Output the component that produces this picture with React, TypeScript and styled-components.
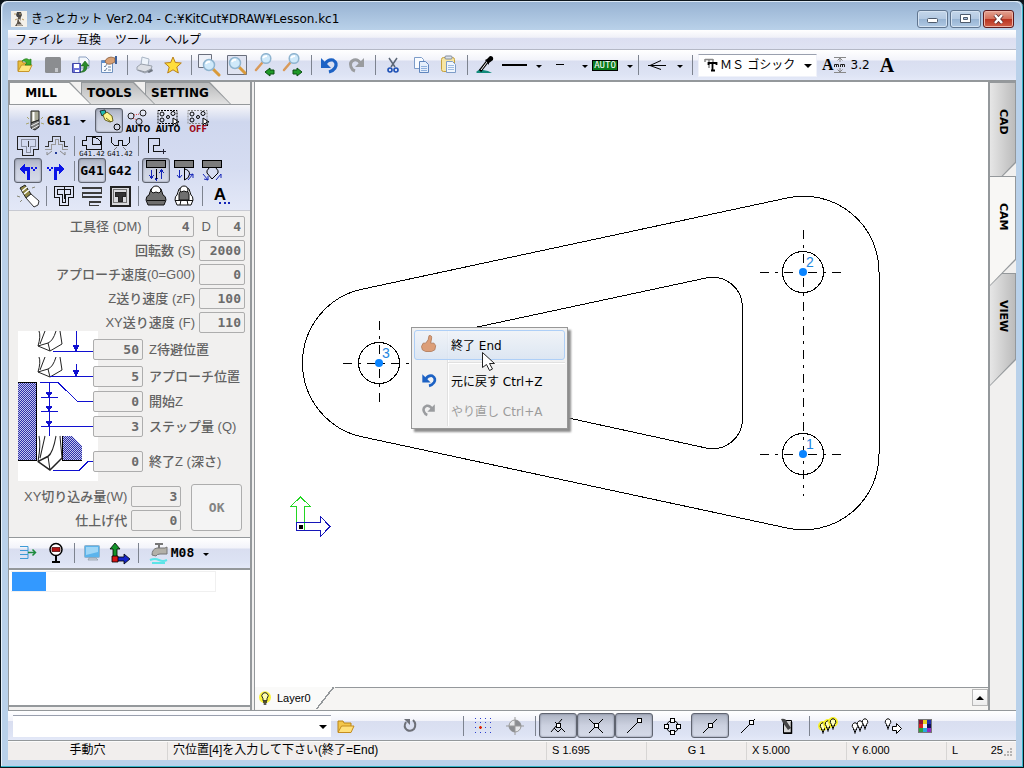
import React from "react";
import styled, { createGlobalStyle, css } from "styled-components";

const ui = `"DejaVu Sans", "Noto Sans CJK JP", sans-serif`;
const gothic = `"Liberation Sans", "Noto Sans CJK JP", sans-serif`;
const mono = `"DejaVu Sans Mono", "Noto Sans CJK JP", monospace`;
const line = "#94989b";
const barFill = "linear-gradient(#ffffff 0%, #f2f3fa 34%, #d9def0 36%, #dde3f4 80%, #e4e9f8 100%)";

const GlobalStyle = createGlobalStyle`
  * { box-sizing: border-box; }
  body { margin: 0; background: #0b141b; font: 12px ${ui}; color: #000; }
  button, input, select { font: inherit; color: inherit; margin: 0; }
  button { padding: 0; border: 0; background: none; }
  svg { display: block; flex: none; }
`;

/* ---------- window frame ---------- */
const Frame = styled.div`
  min-height: 100vh;
  display: flex;
  flex-direction: column;
  padding: 0 7px 7px;
  border: 1px solid #0b141b;
  border-radius: 7px 7px 0 0;
  background: #b9d1ea;
  box-shadow: inset -1px -1px 0 #35b5c8, inset 1px 1px 0 #e8f2fb;
`;
const TitleBar = styled.header`
  height: 29px;
  margin: 0 -5px;
  padding: 5px 7px 0 8px;
  display: flex;
  align-items: center;
  gap: 4px;
  background: linear-gradient(#98b3d3, #b9d1e9);
  border-radius: 6px 6px 0 0;
  border-top: 1px solid #dbe8f5;
`;
const Title = styled.h1`
  flex: 1;
  margin: 0;
  font: 12px/18px ${ui};
  white-space: nowrap;
`;
const WindowButtons = styled.div`
  display: flex;
  gap: 2px;
`;
const WindowButton = styled.button<{ $danger?: boolean }>`
  width: 31px;
  height: 18px;
  display: grid;
  place-items: center;
  border: 1px solid ${(p) => (p.$danger ? "#5e1a1c" : "#60758f")};
  border-radius: 3px;
  background: ${(p) =>
    p.$danger
      ? "linear-gradient(#e3a494 0%, #d4705a 48%, #b93320 52%, #cf5f48 100%)"
      : "linear-gradient(#c4d6ea 0%, #b3c9e2 48%, #98b4d3 52%, #b0c9e4 100%)"};
  box-shadow: inset 0 0 0 1px ${(p) => (p.$danger ? "#eeb3a6" : "#d5e3f2")};
`;
const MenuBar = styled.nav`
  height: 20px;
  display: flex;
  background: linear-gradient(#ffffff, #f0f1f8 38%, #dcdff1 45%, #dfe3f3);
  border-bottom: 1px solid #b4b8c6;
`;
const MenuItem = styled.button`
  padding: 0 7px;
  font-size: 12px;
  line-height: 18px;
  white-space: nowrap;
`;

/* ---------- tool bars ---------- */
const ToolBar = styled.div`
  height: 32px;
  flex: none;
  display: flex;
  align-items: center;
  padding-left: 3px;
  background: ${barFill};
  border-bottom: 2px solid ${line};
`;
const Separator = styled.span`
  width: 8px;
  height: 20px;
  flex: none;
  background: linear-gradient(#7d838f, #7d838f) 4px 0 / 1px 100% no-repeat;
`;
const ToolButton = styled.button<{ $w?: number; $on?: boolean }>`
  width: ${(p) => p.$w ?? 28}px;
  height: 25px;
  flex: none;
  display: flex;
  align-items: center;
  justify-content: center;
  ${(p) =>
    p.$on &&
    css`
      border: 1px solid #5f6470;
      border-radius: 3px;
      background: linear-gradient(#aeb4c4, #ccd1e0 50%, #d6dbe9);
      box-shadow: inset 0 0 2px #6b7080;
    `}
`;
const CodeLabel = styled.span`
  font: bold 13px/16px ${mono};
`;
const Caret = styled.i<{ $far?: boolean }>`
  border: 3px solid transparent;
  border-top-color: #000;
  border-bottom: 0;
  margin: 2px 0 0 ${(p) => (p.$far ? 10 : 9)}px;
`;
const AutoBadge = styled.span`
  padding: 0 1px;
  border: 1px solid #000;
  background: #0a7a1c;
  color: #fff;
  font: 9px/9px ${mono};
`;
const FontBox = styled.label`
  position: relative;
  width: 119px;
  height: 23px;
  margin: 0 5px 0 2px;
  display: flex;
  align-items: center;
  padding-left: 5px;
  background: #fff;
  border: 1px solid #f0f2fa;
  border-top-color: #9aa0ae;
`;
const Select = styled.select`
  flex: 1;
  min-width: 0;
  height: 100%;
  appearance: none;
  border: 0;
  padding: 0 18px 0 2px;
  outline: none;
  background: none;
  font: 12px/18px ${gothic};
`;
const BoxCaret = styled.i`
  position: absolute;
  right: 4px;
  top: 9px;
  border: 4px solid transparent;
  border-top-color: #000;
  border-bottom: 0;
  pointer-events: none;
`;
const SerifA = styled.span`
  font: bold 20px/22px "Liberation Serif", serif;
`;
const SizeLabel = styled.span`
  font-size: 12px;
  padding: 0 10px 0 5px;
`;
const HeightButton = styled.button`
  display: flex;
  align-items: center;
  font: bold 16px/20px "Liberation Serif", serif;
`;

/* ---------- body ---------- */
const Body = styled.main`
  flex: 1;
  display: flex;
  background: #f1f0ef;
`;
const Side = styled.aside`
  width: 244px;
  flex: none;
  display: flex;
  flex-direction: column;
  margin-right: 2px;
  border-left: 1px solid ${line};
  border-right: 2px solid ${line};
`;
const SideTabs = styled.div`
  height: 22px;
  flex: none;
  display: flex;
`;
const SideTab = styled.button<{ $w: number; $active?: boolean; $z: number }>`
  position: relative;
  z-index: ${(p) => p.$z};
  width: ${(p) => p.$w}px;
  flex: none;
  margin-right: -10px;
  padding: 0 24px 0 6px;
  font: bold 12px/22px ${ui};
  background: ${line};
  clip-path: polygon(0 0, calc(100% - 21px) 0, 100% 100%, 0 100%);
  &::before {
    content: "";
    position: absolute;
    z-index: -1;
    inset: 1px 1px 0 1px;
    background: ${(p) => (p.$active ? "#fafaf9" : "linear-gradient(#b9babb, #e2e2e2)")};
    clip-path: polygon(0 0, calc(100% - 21px) 0, 100% 100%, 0 100%);
  }
`;
const ToolBlock = styled.section`
  flex: none;
  padding: 3px 0 2px 5px;
  border-top: 1px solid ${line};
  border-bottom: 1px solid #c8cad2;
  background: linear-gradient(#f6f6f9, #cfd7ee 16%, #d5dcf1 60%, #e3e8f7);
`;
const ToolRow = styled.div`
  height: 25px;
  display: flex;
  align-items: center;
`;
const Form = styled.form`
  flex: none;
  margin: 0;
  padding: 3px 5px 5px 9px;
  color: #626262;
  font: 500 13px/21px ${gothic};
  border-bottom: 1px solid ${line};
`;
const FieldRow = styled.div`
  display: flex;
  align-items: center;
  justify-content: flex-end;
  height: 24px;
`;
const FieldLabel = styled.label<{ $wide?: boolean }>`
  margin: 0 ${(p) => (p.$wide ? 6 : 4)}px 0 ${(p) => (p.$wide ? 8 : 6)}px;
  white-space: nowrap;
`;
const Field = styled.input<{ $w?: number }>`
  width: ${(p) => p.$w ?? 46}px;
  height: 21px;
  flex: none;
  padding: 0 3px;
  border: 1px solid #adadad;
  border-radius: 2px;
  background: #f1f0ef;
  color: #6b6b6b;
  font: bold 13px/18px ${mono};
  text-align: right;
`;
const DepthArea = styled.div`
  display: flex;
  margin-top: -3px;
`;
const DepthGrid = styled.div`
  margin: 8px 0 0 -5px;
  display: grid;
  grid-template-rows: 27px 25px 25px 35px 22px;
`;
const DepthRow = styled.div`
  display: flex;
`;
const FinishArea = styled.div`
  display: flex;
  gap: 10px;
  margin-top: 3px;
  padding-right: 3px;
  justify-content: flex-end;
`;
const OkButton = styled.button`
  width: 51px;
  height: 47px;
  border: 1px solid #adadad;
  border-radius: 3px;
  background: #f4f4f4;
  color: #838383;
  font: bold 13px ${mono};
`;
const MiniBar = styled(ToolBar)`
  padding-left: 5px;
`;
const ListBox = styled.div`
  flex: 1;
  min-height: 100px;
  margin-bottom: 3px;
  padding: 1px 2px;
  background: #fff;
  border-bottom: 2px solid ${line};
`;
const ListRow = styled.div`
  width: 205px;
  height: 21px;
  border: 1px solid #f0f0f0;
  border-left: 0;
  background: linear-gradient(#3399ff, #3399ff) 1px 0 / 34px 100% no-repeat;
`;

/* ---------- drawing area ---------- */
const Work = styled.section`
  flex: 1;
  min-width: 0;
  display: flex;
  flex-direction: column;
  border-left: 1px solid ${line};
  border-right: 2px solid ${line};
`;
const Canvas = styled.div`
  position: relative;
  flex: 1;
  display: flex;
  background: #fff;
  overflow: hidden;
`;
const Drawing = styled.svg`
  width: 100%;
  min-height: 460px;
  font: 14px "Liberation Sans", sans-serif;
`;
const LayerBar = styled.div`
  height: 23px;
  flex: none;
  display: flex;
  justify-content: space-between;
  align-items: flex-start;
  background: #f6f5f3;
  border-top: 1px solid ${line};
`;
const LayerTab = styled.button`
  width: 80px;
  height: 22px;
  margin-top: -1px;
  padding-left: 2px;
  display: flex;
  align-items: center;
  gap: 4px;
  font: 11px/20px ${gothic};
  background: linear-gradient(128deg, #fafaf9 80%, ${line} 80%, ${line} 82%, #f6f5f3 82%);
`;
const ScrollButton = styled.button`
  width: 16px;
  height: 17px;
  margin-top: 1px;
  display: grid;
  place-items: center;
  border: 1px solid #b8b8b8;
  background: linear-gradient(#fff, #ededed);
  &::before {
    content: "";
    border: 4px solid transparent;
    border-bottom-color: #000;
    border-top: 0;
  }
`;
const PopupMenu = styled.div`
  position: absolute;
  left: 156px;
  top: 245px;
  width: 157px;
  padding: 2px;
  border: 1px solid #979797;
  background: linear-gradient(#e0e0e0, #e0e0e0) 35px 2px / 1px calc(100% - 4px) no-repeat,
    linear-gradient(#fff, #fff) 36px 2px / 1px calc(100% - 4px) no-repeat, #f1f1f1;
  box-shadow: 3px 3px 2px #8d8d8d;
`;
const PopupItem = styled.button<{ $hot?: boolean }>`
  width: 100%;
  height: 30px;
  display: flex;
  align-items: center;
  gap: 12px;
  padding: 0 0 2px 4px;
  border: 1px solid ${(p) => (p.$hot ? "#aecff7" : "transparent")};
  border-radius: 3px;
  background: ${(p) => (p.$hot ? "linear-gradient(rgba(240,244,250,.7), rgba(216,228,243,.8))" : "none")};
  font-size: 12px;
  white-space: nowrap;
  &:disabled { color: #9b9b9b; }
`;
const PopupRule = styled.hr`
  margin: 2px 0 2px 34px;
  border: 0;
  border-top: 1px solid #e0e0e0;
  border-bottom: 1px solid #fff;
`;
const Pointer = styled.svg`
  position: absolute;
  left: 226px;
  top: 269px;
`;

const ViewTabs = styled.div`
  width: 26px;
  flex: none;
  display: flex;
  flex-direction: column;
`;
const ViewTab = styled.button<{ $h: number; $active?: boolean }>`
  position: relative;
  z-index: ${(p) => (p.$active ? 2 : 1)};
  height: ${(p) => p.$h}px;
  margin-bottom: -13px;
  padding-top: 27px;
  writing-mode: vertical-rl;
  text-align: left;
  font: bold 11px/22px ${ui};
  background: ${line};
  clip-path: polygon(0 0, 100% 0, 100% calc(100% - 26px), 0 100%);
  &::before {
    content: "";
    position: absolute;
    z-index: -1;
    inset: 1px 1px 1px 0;
    background: ${(p) => (p.$active ? "#f8f7f5" : "linear-gradient(90deg, #e6e6e6, #bcbcbc)")};
    clip-path: polygon(0 0, 100% 0, 100% calc(100% - 26px), 0 100%);
  }
`;

/* ---------- bottom ---------- */
const BottomBar = styled(ToolBar)`
  height: 31px;
  padding-left: 5px;
  border-top: 1px solid ${line};
  border-bottom: 1px solid ${line};
`;
const Combo = styled.label`
  position: relative;
  width: 318px;
  height: 22px;
  display: flex;
  background: #fff;
  border-top: 1px solid #9aa0ae;
`;
const Spacer = styled.span`
  width: 34px;
  flex: 0 1 auto;
`;
const StatusBar = styled.footer`
  height: 19px;
  flex: none;
  display: flex;
  background: #f1eeed;
  border-top: 1px solid #fbfbfb;
  font: 12px/17px ${gothic};
`;
const StatusCell = styled.div<{ $w?: number; $center?: boolean }>`
  ${(p) => (p.$w ? `width: ${p.$w}px; flex: none;` : "flex: 1; min-width: 0;")}
  padding: 0 5px;
  overflow: hidden;
  white-space: nowrap;
  text-align: ${(p) => (p.$center ? "center" : "left")};
  border-right: 1px solid #d7d5d4;
  &:last-child {
    border: 0;
    display: flex;
    padding-right: 3px;
  }
`;
const ReadOut = styled.span<{ $end?: boolean }>`
  font-size: 11px;
  margin-left: ${(p) => (p.$end ? "auto" : "0")};
`;

/* ---------- icons, drawn on a 24 x 24 grid ---------- */
const Lens = () => (
  <>
    <path d="M14 14l6 6" stroke="#d99a3a" strokeWidth="3" strokeLinecap="round" />
    <circle cx="10" cy="10" r="5.5" fill="#cfe9fa" stroke="#8fb4cf" strokeWidth="1.5" />
    <path d="M7 9q1-3 4-2" stroke="#fff" strokeWidth="2" fill="none" />
  </>
);
const TallLens = () => (
  <>
    <path d="M9 10l-6 7" stroke="#d99a5a" strokeWidth="2.5" strokeLinecap="round" />
    <circle cx="13" cy="5.5" r="4.800" fill="#cfe9fa" stroke="#8fb4cf" strokeWidth="1.5" />
    <path d="M10 5q1-2 4-2" stroke="#fff" strokeWidth="2" fill="none" />
  </>
);
const Bulb = ({ x, y, glow }: { x: number; y: number; glow?: boolean }) => (
  <g transform={`translate(${x} ${y})`} stroke="#000">
    {glow && <circle cx="3" cy="4" r="5" fill="#f7f12a" stroke="none" />}
    <path d="M1.5 6.5Q-.5 4.5 .5 2.5Q3 -1 5.5 2.5Q6.5 4.5 4.5 6.5V8h-3z" fill={glow ? "#fdfdb8" : "#fff"} />
    <path d="M2 9.5h2M2.5 11h1" strokeWidth="1.5" />
  </g>
);
const Box = ({ x, y }: { x: number; y: number }) => (
  <rect x={x - 1.5} y={y - 1.5} width="4" height="4" fill="#fff" stroke="#000" />
);
const Chain = ({ dim }: { dim?: boolean }) => (
  <g fill="none" stroke="#000">
    <rect x="2" y="1.5" width="19" height="13" strokeDasharray="2 1" stroke={dim ? "#888" : "#000"} />
    <circle cx="6" cy="5" r="2" />
    <circle cx="17" cy="4.5" r="2" />
    <circle cx="12" cy="8" r="1.5" />
    <circle cx="6" cy="11" r="2" />
    <path d="M17 9v7l2-2 2 3 1-1-2-3h3z" fill="#fff" />
  </g>
);

const art: Record<string, React.ReactNode> = {
  open: (
    <>
      <path d="M5 18V8h4l1 2h7v3" fill="#e9be3c" stroke="#b98a1c" />
      <path d="M5 18.5L8.500 12H19l-3 6.500z" fill="#ffe680" stroke="#c8962a" />
      <path d="M9 8q4-4 7-1l2-1v6h-6l2-2q-3-3-5-2z" fill="#3fae2c" stroke="#1d7a18" strokeWidth=".7" />
    </>
  ),
  save: (
    <>
      <rect x="4" y="4" width="16" height="16" rx="1.5" fill="#8b8d90" />
      <path d="M14 15h3v4h-3z" fill="#c4c6ca" />
    </>
  ),
  export: (
    <>
      <path d="M10 4h7l3 3v8H10z" fill="#f3f7fc" stroke="#8a9ec0" />
      <path d="M3.5 10.5h8v9h-8z" fill="#6d74d8" stroke="#3f46a8" />
      <path d="M5 11h5v4H5zM6 17h4v2H6z" fill="#fff" />
      <path d="M11 19q4 0 4-6h-3l4-5 4 5h-2q0 7-7 6z" fill="#2a8a2a" stroke="#135e13" strokeWidth=".6" />
    </>
  ),
  props: (
    <>
      <path d="M4.5 7.5h11v12h-11z" fill="#f6fafe" stroke="#6e90bd" />
      <path d="M5 8h10v2H5z" fill="#5a8fd0" />
      <path d="M7 13l1 1 2-3M7 17l1 1 2-3M11 14h3M11 17h3" stroke="#7186a3" fill="none" />
      <path d="M8 8q2-4 6-4l4 1v4l-4 2q-5 1-6-3z" fill="#d9a074" stroke="#7c5638" strokeWidth=".7" />
      <path d="M18 3h2v8h-2z" fill="#3e5f98" />
    </>
  ),
  print: (
    <>
      <path d="M9 4l7 2-1 7-7-1z" fill="#eef4fb" stroke="#a9b5c4" />
      <path d="M4 14l4-3 11 2-1 4-6 3-8-3z" fill="#dcdfe5" stroke="#9aa1ac" />
      <path d="M5 17l7 2 6-3" stroke="#8a919c" fill="none" />
      <path d="M14 19l5-3 1 2-4 2z" fill="#6e7580" />
    </>
  ),
  star: <path d="M12 4l2.300 5.500 6 .5-4.500 4 1.500 6-5.300-3.200L6.700 20l1.500-6-4.500-4 6-.5z" fill="#ffde3b" stroke="#b98018" />,
  zoomBox: (
    <>
      <path d="M1.5 1.5h13v13h-13z" fill="#eef1f8" stroke="#6a6f7c" />
      <g transform="translate(2 2)"><Lens /></g>
    </>
  ),
  zoomFit: (
    <>
      <path d="M2.5 2.5h19v19h-19z" fill="#dfe3f1" stroke="#6a6f7c" />
      <Lens />
    </>
  ),
  zoomPrev: (
    <>
      <TallLens />
      <path d="M12 19l5-4v2h4v4h-4v2z" fill="#1f9a28" stroke="#0b4f12" />
    </>
  ),
  zoomNext: (
    <>
      <TallLens />
      <path d="M21 19l-5-4v2h-4v4h4v2z" fill="#1f9a28" stroke="#0b4f12" />
    </>
  ),
  undo: (
    <>
      <path d="M8 11q3-5 8-4 5 3 2 8-2 3-6 4" fill="none" stroke="#1d62c4" strokeWidth="3.200" />
      <path d="M4 5v10h10z" fill="#1d62c4" />
    </>
  ),
  redo: (
    <>
      <path d="M16 11q-3-5-7-4-5 2-3 7 1 3 4 4" fill="none" stroke="#9a9c9f" strokeWidth="3" />
      <path d="M19 5v9h-9z" fill="#9a9c9f" />
    </>
  ),
  cut: (
    <>
      <path d="M8 5l6 9M16 5l-6 9" stroke="#5b6675" strokeWidth="1.5" />
      <circle cx="9" cy="17" r="2" fill="none" stroke="#1c4fb5" strokeWidth="1.6" />
      <circle cx="15" cy="17" r="2" fill="none" stroke="#1c4fb5" strokeWidth="1.6" />
    </>
  ),
  copy: (
    <>
      <path d="M5.5 4.5h7l2 2v9h-9z" fill="#fafcff" stroke="#7d9cc8" />
      <path d="M10.5 8.5h6l3 3v8h-9z" fill="#e4eefb" stroke="#5f85bd" />
      <path d="M12 13.5h6M12 15.5h6M12 17.5h6" stroke="#8fb0dd" />
    </>
  ),
  paste: (
    <>
      <rect x="4.5" y="4.500" width="13" height="14" rx="2" fill="#f7e6a4" stroke="#c5a03d" />
      <rect x="8" y="3" width="7" height="3" rx="1" fill="#dde3ec" stroke="#818b9b" />
      <path d="M9.5 8.500h6l3 3v8h-9z" fill="#f0f6fd" stroke="#7d9cc8" />
      <path d="M11 12.5h6M11 14.5h6M11 16.5h6" stroke="#9fbce2" />
    </>
  ),
  dropper: (
    <>
      <path d="M3 19q4-4 7-2l5 1 4 2H4z" fill="#138b7c" />
      <path d="M7 18l7-9" stroke="#000" strokeWidth="3" />
      <path d="M8 17l6-8" stroke="#fff" strokeWidth="1" />
      <path d="M12 7l2-1 3-3q4 0 3 4l-4 3v2z" fill="#000" />
    </>
  ),
  drill: (
    <>
      <path d="M8 2h8v9l-8 3z" fill="#a8a896" stroke="#222" />
      <path d="M10.5 3v9" stroke="#fff" strokeWidth="2" />
      <path d="M8 14l8-3v7l-4 3-4-2z" fill="#777" stroke="#222" />
      <path d="M8 17l8-4M9 20l7-4" stroke="#eee" />
      <path d="M4 8l2 2M20 8l-2 2M3 15l3-1M21 15l-3-1" stroke="#a9a46a" />
    </>
  ),
  manualHole: (
    <>
      <path d="M3 2l5-1 1 3-4 3z" fill="#20b8b0" stroke="#000" strokeWidth=".7" />
      <path d="M6 6l4-3 5 4 1 5-3 1-5-2z" fill="#fdf48a" stroke="#4a4400" strokeWidth=".8" />
      <path d="M9 9l5 4" stroke="#4a4400" strokeWidth=".8" />
      <circle cx="20" cy="18" r="3" fill="none" stroke="#000" />
    </>
  ),
  autoHoles: (
    <g fill="none" stroke="#222">
      <circle cx="5" cy="7" r="3" />
      <circle cx="17" cy="4" r="3" />
      <circle cx="13" cy="12.500" r="3" />
      <path d="M8 6l6-1M7 9l4 2" stroke="#c33" strokeDasharray="1 1" />
    </g>
  ),
  frameHoles: <Chain />,
  frameHolesOff: <Chain dim />,
  pocket: (
    <g fill="none" shapeRendering="crispEdges">
      <path d="M1.5 2.5h21v13h-5v6h-11v-6h-5z" stroke="#222" />
      <path d="M5 5.5h14v7h-5v6h-4v-6H5z" stroke="#8a8fa0" />
      <path d="M12.5 7v6" stroke="#333" />
    </g>
  ),
  profile: (
    <g fill="none" shapeRendering="crispEdges">
      <path d="M1 12.500h3v-5h4v-5h8v5h4v5h4" stroke="#333" />
      <path d="M1 15.500h6v-5h4v-5h3v5h4v5h6" stroke="#999" />
      <path d="M8 17l-5 4v-3M16 17l5 4v-3" stroke="#888" shapeRendering="auto" />
      <path d="M11 18h2v2h-2z" fill="#223a9a" />
    </g>
  ),
  corner: (
    <g fill="none" stroke="#111" shapeRendering="crispEdges">
      <path d="M2.5 6.500h4v-4h15v13h-15v-4h-4z" />
      <path d="M12.5 3v7h8q0-6-8-7" />
    </g>
  ),
  chamfer: (
    <g fill="none" stroke="#111">
      <path d="M3.5 2.500v6l3 3h4v-5h4v5h4l3-3v-6" shapeRendering="crispEdges" />
      <path d="M9 13l-3 3M15 13l3 3" stroke="#777" />
    </g>
  ),
  lead: (
    <g fill="none" stroke="#111" shapeRendering="crispEdges">
      <path d="M4.5 19V4.500h11v7h-6v6h8" />
      <path d="M19 15v5M17 17.500h5" stroke="#223" />
    </g>
  ),
  turnLeft: (
    <g fill="#0a14e8" shapeRendering="crispEdges">
      <path d="M3 10l6-5v3h5v13h-3V12H9v3z" />
      <path d="M15 8h2v2h-2zM19 8h2v2h-2zM17 10h2v2h-2z" />
    </g>
  ),
  turnRight: (
    <g fill="#0a14e8" shapeRendering="crispEdges">
      <path d="M21 10l-6-5v3h-5v13h3V12h2v3z" />
      <path d="M7 8h2v2H7zM3 8h2v2H3zM5 10h2v2H5z" />
    </g>
  ),
  plunge: (
    <g shapeRendering="crispEdges">
      <path d="M2.5 1.5h19v7h-19z" fill="#7c7c7c" stroke="#000" />
      <path d="M12.5 10v12" stroke="#000" />
      <path d="M7.5 11v8M5 16l2.500 3 2.500-3M17.500 20v-9M15 14l2.500-3 2.500 3M11 19l1.500 2 1.500-2" stroke="#1425b8" />
    </g>
  ),
  ramp: (
    <g>
      <path d="M2.5 1.5h19v7h-19z" fill="#7c7c7c" stroke="#000" shapeRendering="crispEdges" />
      <path d="M12.5 9v12q5-2 5-6 0-4-5-5" stroke="#000" />
      <path d="M7.5 11v8M5 16l2.500 3 2.500-3M16 21l5-6v4M21 15l-4 1" stroke="#1425b8" />
    </g>
  ),
  spiral: (
    <g>
      <path d="M2.5 1.5h19v7h-19z" fill="#7c7c7c" stroke="#000" shapeRendering="crispEdges" />
      <path d="M9 9q-3 3-2 5l5 6 6-6q1-2-2-5" stroke="#000" />
      <path d="M3 15l5 6v-4M8 21l-4-1M16 21l5-6v4" stroke="#1425b8" />
    </g>
  ),
  eraser: (
    <>
      <path d="M4 4l5-3 6 9-5 4z" fill="#8f8746" stroke="#222" />
      <path d="M6 7l5-4M8 10l5-4" stroke="#fff" strokeWidth="1.5" />
      <path d="M10 14l5-4 8 7-1 4-4 2z" fill="#fff" stroke="#333" />
      <path d="M1 12l3 1M4 18l2-2M16 4l3-1" stroke="#887" />
    </>
  ),
  tPath: (
    <g fill="none" stroke="#111" shapeRendering="crispEdges">
      <path d="M2.5 2.500h19v11h-5v8h-9v-8h-5z" />
      <path d="M5.500 5.500h13v5h-5v8h-3v-8h-5zM12.500 3v12" />
    </g>
  ),
  zigzag: (
    <path d="M2 3.500h20M2 4.500h20M2 8.500h20M2 9.500h20M2 12.500h20M2 13.500h20M9 17.500h12M9 18.500h12M2 9v4M21.500 4v5M9.500 18v3h9" fill="none" stroke="#3c3c3c" shapeRendering="crispEdges" />
  ),
  spiralT: (
    <g fill="none" stroke="#222" shapeRendering="crispEdges">
      <path d="M2.5 2.500h19v19h-19z" fill="#d9dadd" strokeWidth="2" />
      <path d="M5.500 5.500h13v13h-13z" stroke="#777" />
      <path d="M7 8h10v4h-3v5h-4v-5H7z" fill="#333" />
    </g>
  ),
  dome: (
    <>
      <path d="M2 16q0-4 3-5l2-6q5-4 10 0l2 6q3 1 3 5l-2 5H4z" fill="#6f6f6f" stroke="#111" />
      <path d="M7 7q1-5 5-5t5 5l-2 2-3-1-3 1z" fill="#fff" stroke="#111" />
      <path d="M3 16.500h18" stroke="#111" />
    </>
  ),
  domeHalf: (
    <>
      <path d="M3 16q0-4 2-5l2-6q5-4 10 0l2 6q2 1 2 5l-2 5H5z" fill="#fff" stroke="#111" />
      <path d="M7 10l2-4h6l2 4v6H7z" fill="#6f6f6f" stroke="#111" />
      <path d="M8 7q0-5 4-5t4 5l-1 1-3-1-3 1z" fill="#fff" stroke="#111" />
      <path d="M3 16.500h18M9 16l-1 5M15 16l1 5" stroke="#111" />
    </>
  ),
  insert: (
    <g fill="none" stroke="#3d9ad6">
      <path d="M4 5.500h8v4H4M4 9.500h8v4H4M4 13.500h8v4H4" />
      <path d="M12 11.500h7M16.500 8.500l3 3-3 3" stroke="#1d8a3c" strokeWidth="1.5" />
    </g>
  ),
  stop: (
    <>
      <circle cx="12" cy="8.500" r="6" fill="#fff" stroke="#000" strokeWidth="1.500" />
      <path d="M8 6.500h8v4H8z" fill="#b41414" stroke="#400" strokeWidth=".7" />
      <path d="M12 15v6M8 21h8" stroke="#000" strokeWidth="2" />
    </>
  ),
  monitor: (
    <>
      <rect x="4.500" y="4.500" width="15" height="12" rx="1" fill="#5bb4ec" stroke="#8fb2cc" />
      <path d="M6 6h12v5l-12 3z" fill="#9fd6f6" />
      <path d="M9 17h7l2 2H8z" fill="#cdd6df" stroke="#8995a2" strokeWidth=".7" />
    </>
  ),
  axes: (
    <g stroke="#000" strokeWidth=".8">
      <path d="M5 17V8H2l5-6 5 6H9v9z" fill="#13932a" />
      <path d="M9 16h7v-3l6 5-6 5v-3H9z" fill="#1426c8" />
      <path d="M4 15h6v6H4z" fill="#d81616" />
    </g>
  ),
  faucet: (
    <>
      <path d="M8 3h8M12 3v4" stroke="#777" strokeWidth="2" />
      <path d="M5 14q0-6 5-7h8l2-1v7h-7q-3 0-4 2z" fill="#b3b0a8" stroke="#777" />
      <path d="M3 19q5-2 9 0t8 0M5 22h13" stroke="#5ce4e8" strokeWidth="2" fill="none" />
    </>
  ),
  thumb: (
    <path d="M12 2q4-1 3 4l-1 5h4l2 3-1 5-4 2H8l-4-2-1-4 2-4h3l3-4z" fill="#dc9e78" stroke="#b07a58" />
  ),
  bulb: (
    <>
      <circle cx="12" cy="11" r="9" fill="#fbf53a" />
      <path d="M9 13Q5 8 9 5q3-2 6 0 4 3 0 8v3H9z" fill="#fdfdb0" stroke="#222" strokeWidth="1.500" />
      <path d="M9 18h6M10 21h4" stroke="#222" strokeWidth="2" />
    </>
  ),
  folder: (
    <>
      <path d="M4 18V7h5l1 2h7v3" fill="#f3c64a" stroke="#b98418" />
      <path d="M4 18.500L7.500 12H20l-3 6.500z" fill="#ffe07a" stroke="#c48c20" />
    </>
  ),
  rotate: (
    <>
      <path d="M8 8q-3 5 1 8 4 2 7-1 3-5-1-9" fill="none" stroke="#6d7078" strokeWidth="2" />
      <path d="M6 5h6v6z" fill="#6d7078" />
    </>
  ),
  gridSnap: (
    <g shapeRendering="crispEdges">
      {[4, 8, 13, 18].map((y) =>
        [4, 9, 14, 19].map((x) => <rect key={`${x}-${y}`} x={x} y={y} width="1" height="1" fill="#2d3fd0" />)
      )}
      <rect x="8" y="12" width="3" height="3" fill="#f5b060" />
      <path d="M8 13.500h3M9.500 12v3" stroke="#d01a1a" />
    </g>
  ),
  target: (
    <>
      <circle cx="12" cy="12" r="6" fill="#e6e7ea" stroke="#999" />
      <path d="M12 12V6a6 6 0 0 1 6 6zM12 12v6a6 6 0 0 1-6-6z" fill="#8b8d91" />
      <path d="M12 3v18M3 12h18" stroke="#999" />
    </>
  ),
  snapFoot: (
    <g fill="none" stroke="#000">
      <path d="M5 18L16 5M9 8l10 10M8 14l4 4 4-4" />
      <Box x={12} y={11} />
    </g>
  ),
  snapCross: (
    <g fill="none" stroke="#000">
      <path d="M5 5l14 14M19 5L5 19" />
      <Box x={12} y={11} />
    </g>
  ),
  snapEnd: (
    <g fill="none" stroke="#000">
      <path d="M5 19L17 7" />
      <Box x={17} y={6} />
    </g>
  ),
  snapQuad: (
    <g fill="none" stroke="#000">
      <circle cx="12.500" cy="12.500" r="6" />
      <Box x={12} y={6} />
      <Box x={12} y={18} />
      <Box x={6} y={12} />
      <Box x={18} y={12} />
    </g>
  ),
  snapOn: (
    <g fill="none" stroke="#000">
      <path d="M5 19L19 5" />
      <Box x={12} y={11} />
    </g>
  ),
  snapNear: (
    <g fill="none" stroke="#000">
      <path d="M5 19L19 5" />
      <Box x={15} y={8} />
    </g>
  ),
  clear: (
    <>
      <path d="M9.500 6.500h8v13h-8z" fill="#d5d5d5" stroke="#000" />
      <path d="M7 5q5-1 6 3l4 6-3 2-5-7z" fill="#444" />
      <path d="M10 19h7.500V8" stroke="#000" strokeWidth="1.500" fill="none" />
    </>
  ),
  bulbsOn: <><Bulb x={3} y={8} glow /><Bulb x={8} y={6} glow /><Bulb x={13} y={4} glow /></>,
  bulbsOff: <><Bulb x={3} y={8} /><Bulb x={8} y={6} /><Bulb x={13} y={4} /></>,
  bulbMove: (
    <>
      <Bulb x={4} y={4} />
      <path d="M11.500 12.500h4v-3l5 5-5 5v-3h-4z" fill="#fff" stroke="#000" />
    </>
  ),
};

const palette = ["#8c1438", "#e8d020", "#2030a8", "#d82020", "#f0f0f0", "#101060", "#30a040", "#28a8e0", "#9030c0"];

const Icon = ({ name, size = 24 }: { name: string; size?: number }) => (
  <svg width={size} height={size} viewBox="0 0 24 24" fill="none" aria-hidden>
    {art[name]}
  </svg>
);

/* captions printed under small icons */
const Stack = styled.span`
  display: flex;
  flex-direction: column;
  align-items: center;
`;
const Caption = styled.span<{ $color?: string; $plain?: boolean }>`
  color: ${(p) => p.$color ?? "#000"};
  font: ${(p) => (p.$plain ? `7px/7px ${mono}` : `bold 8px/7px ${ui}`)};
`;
const Crop = styled.span`
  height: 17px;
  overflow: hidden;
`;
const BigA = styled.span`
  font: bold 17px/15px ${gothic};
`;
const Dots = styled.span`
  width: 11px;
  margin-left: 8px;
  border-bottom: 2px dotted #1425b8;
`;

const Tool = ({ icon, label, on, w }: { icon: string; label: string; on?: boolean; w?: number }) => (
  <ToolButton type="button" aria-label={label} $on={on} $w={w}>
    <Icon name={icon} />
  </ToolButton>
);
const CaptionTool = ({ icon, caption, color, plain, w = 28 }: { icon: string; caption: string; color?: string; plain?: boolean; w?: number }) => (
  <ToolButton type="button" $w={w}>
    <Stack>
      <Crop><Icon name={icon} /></Crop>
      <Caption $color={color} $plain={plain}>{caption}</Caption>
    </Stack>
  </ToolButton>
);

const Drill = () => (
  <g stroke="#222">
    <path d="M0 0l-1 15 12 5 12-7-2-13z" fill="#fff" stroke="none" />
    <path d="M0 0q2 5-1 15l12 5 12-7-2-13M17 0q-3 10-8 12l-10 3M6 0L1 13M9 12l2 8" fill="none" />
  </g>
);

const DepthPicture = () => (
  <svg width="80" height="150" aria-hidden>
    <defs>
      <pattern id="hatch" width="2" height="2" patternUnits="userSpaceOnUse">
        <rect width="2" height="2" fill="#c4c6ee" />
        <path d="M0 0h1v1H0zM1 1h1v1H1z" fill="#2c2fa8" />
      </pattern>
    </defs>
    <rect width="80" height="150" fill="#fff" />
    <g transform="translate(21 0)"><Drill /></g>
    <g transform="translate(21 26)"><Drill /></g>
    <path d="M0 51h19v78H0z" fill="url(#hatch)" />
    <path d="M44 105h10l10 10v14H44z" fill="url(#hatch)" />
    <path d="M0 51.500h18.500v78H0M44.500 105v24.500h19" fill="none" stroke="#000" shapeRendering="crispEdges" />
    <g transform="translate(21 105) scale(1 1.7)"><Drill /></g>
    <g fill="none" stroke="#1010d0" shapeRendering="crispEdges">
      <path d="M58.500 0v20M35 20.500h45M58.500 33v12M32 45.500h48" />
      <path d="M22 51.500h18l19 18.500h21M31.500 51v54M23 66.500h17M23 80.500h17M23 95.500h57M35 139.500h26l9-9h10" />
      <path d="M55 14h6l-3 6zM55 39h6l-3 6zM28 61h6l-3 5zM28 75h6l-3 5zM28 90h6l-3 5z" fill="#1010d0" />
    </g>
  </svg>
);

const holes = [
  { n: 1, x: 803, y: 454, from: 760, to: 841 },
  { n: 2, x: 803, y: 272, from: 760, to: 841 },
  { n: 3, x: 379, y: 363, from: 343, to: 423 },
];

const Part = () => (
  <Drawing role="img" aria-label="Lesson.kc1">
    <g transform="translate(-255 -82)" fill="none" stroke="#000" shapeRendering="crispEdges">
      <path d="M363 289L787 198A75.500 75.500 0 0 1 879 272V454A75.500 75.500 0 0 1 787 528L363 437A75.500 75.500 0 0 1 363 289Z" />
      <path d="M440 335L706 278A30 30 0 0 1 742.500 307V418A30 30 0 0 1 706 448L440 390A29 29 0 0 1 440 335Z" />
      <path d="M803.500 230V496M379.500 321V402" strokeDasharray="9 6 3 6" />
      {holes.map((h) => (
        <g key={h.n}>
          <circle cx={h.x} cy={h.y} r="20.500" />
          <path d={`M${h.from} ${h.y + 0.5}H${h.to}`} strokeDasharray="9 6 3 6" />
          <circle cx={h.x} cy={h.y} r="4" fill="#0a84ff" stroke="none" shapeRendering="auto" />
          <text x={h.x + 3} y={h.y - 5} fill="#1e86e0" stroke="none">{h.n}</text>
        </g>
      ))}
      <path d="M296.500 530V506.500H290.500L300.500 497L310.500 506.500H304.500V530" stroke="#22d622" />
      <path d="M296.500 522.500H320.500V516.500L330 526.500L320.500 536.500V530.500H296.500Z" stroke="#1616b8" />
      <path d="M299 525h4v4h-4z" fill="#000" stroke="none" />
    </g>
  </Drawing>
);

const topFields: [string, string][] = [
  ["回転数 (S)", "2000"],
  ["アプローチ速度(0=G00)", "0"],
  ["Z送り速度 (zF)", "100"],
  ["XY送り速度 (F)", "110"],
];
const depthFields: [string, string][] = [
  ["Z待避位置", "50"],
  ["アプローチ位置", "5"],
  ["開始Z", "0"],
  ["ステップ量 (Q)", "3"],
  ["終了Z (深さ)", "0"],
];
const finishFields: [string, string][] = [
  ["XY切り込み量(W)", "3"],
  ["仕上げ代", "0"],
];

export default function App() {
  return (
    <Frame>
      <GlobalStyle />
      <TitleBar>
        <svg width="16" height="16" fill="none" aria-hidden>
          <rect width="16" height="16" fill="#f4f1ea" />
          <path d="M6 1h4l1 3-1 2H6L5 4z" fill="#444" />
          <path d="M7 6h3l-1 5 3 4H4l2-3z" fill="#5b5348" />
          <path d="M3 3h2M11 8l2 1M4 9l2-1M8 3h2" stroke="#b79a62" />
          <path d="M8 8l1 3M6 14h5" stroke="#f4f1ea" />
        </svg>
        <Title>きっとカット Ver2.04 - C:¥KitCut¥DRAW¥Lesson.kc1</Title>
        <WindowButtons>
          <WindowButton type="button" aria-label="最小化">
            <svg width="13" height="10"><rect x="1.500" y="4.500" width="10" height="4" rx="1" fill="#fff" stroke="#4d5a6c" /></svg>
          </WindowButton>
          <WindowButton type="button" aria-label="最大化">
            <svg width="13" height="10"><path d="M1.500.500h10v8h-10z" fill="#fff" stroke="#4d5a6c" /><path d="M4.500 3.500h4v2h-4z" fill="#a9c0dc" stroke="#4d5a6c" /></svg>
          </WindowButton>
          <WindowButton type="button" aria-label="閉じる" $danger>
            <svg width="13" height="10"><path d="M3 1l7 8M10 1L3 9" stroke="#5a2a2c" strokeWidth="4" /><path d="M3 1l7 8M10 1L3 9" stroke="#fff" strokeWidth="2.500" /></svg>
          </WindowButton>
        </WindowButtons>
      </TitleBar>
      <MenuBar>
        {["ファイル", "互換", "ツール", "ヘルプ"].map((m) => <MenuItem key={m} type="button">{m}</MenuItem>)}
      </MenuBar>
      <ToolBar>
        <Tool icon="open" label="開く" />
        <Tool icon="save" label="保存" />
        <Tool icon="export" label="書き出し" />
        <Tool icon="props" label="設定" />
        <Separator />
        <Tool icon="print" label="印刷" />
        <Tool icon="star" label="お気に入り" />
        <Separator />
        <Tool icon="zoomBox" label="範囲拡大" />
        <Tool icon="zoomFit" label="全体表示" />
        <Tool icon="zoomPrev" label="前の表示" />
        <Tool icon="zoomNext" label="次の表示" />
        <Separator />
        <Tool icon="undo" label="元に戻す" />
        <Tool icon="redo" label="やり直し" />
        <Separator />
        <Tool icon="cut" label="切り取り" />
        <Tool icon="copy" label="コピー" />
        <Tool icon="paste" label="貼り付け" />
        <Separator />
        <Tool icon="dropper" label="スポイト" />
        <ToolButton type="button" aria-label="線種" $w={46}>
          <svg width="25" height="4"><path d="M0 1h25v2H0z" /></svg>
          <Caret />
        </ToolButton>
        <ToolButton type="button" aria-label="線幅" $w={46}>
          <svg width="25" height="4"><path d="M8 1h8v1H8z" /></svg>
          <Caret />
        </ToolButton>
        <ToolButton type="button" aria-label="線色" $w={43}>
          <AutoBadge>AUTO</AutoBadge>
          <Caret />
        </ToolButton>
        <Separator />
        <ToolButton type="button" aria-label="矢印" $w={46}>
          <svg width="20" height="12" fill="none" stroke="#000"><path d="M0 6.500h18M13 1.500L2 6.500l11 4" /></svg>
          <Caret />
        </ToolButton>
        <Separator />
        <FontBox>
          <svg width="14" height="14" fill="none" aria-hidden>
            <path d="M1 1.500h8M5 1v9M1 1v3M9 1v3" stroke="#888" strokeWidth="1.500" />
            <path d="M4 5h9M8.500 4v9M4.500 4v3M12.500 4v3M7 12.500h4" stroke="#000" strokeWidth="1.800" />
          </svg>
          <Select aria-label="フォント" defaultValue="gothic"><option value="gothic">ＭＳ ゴシック</option></Select>
          <BoxCaret />
        </FontBox>
        <HeightButton type="button" aria-label="文字高さ">
          A
          <svg width="12" height="18" fill="none" aria-hidden>
            <path d="M0 1.500h12M0 16.500h12M6 2v4M6 12v4M3.500 4.500L6 2l2.500 2.500M3.500 13.500L6 16l2.500-2.500" stroke="#888" />
            <path d="M.500 11V8.500h4V11M2.500 8.500V11M6.500 11V8.500h4V11M8.500 8.500V11" stroke="#222" />
          </svg>
        </HeightButton>
        <SizeLabel>3.2</SizeLabel>
        <SerifA>A</SerifA>
      </ToolBar>

      <Body>
        <Side>
          <SideTabs>
            <SideTab type="button" $w={82} $z={3} $active>MILL</SideTab>
            <SideTab type="button" $w={74} $z={2}>TOOLS</SideTab>
            <SideTab type="button" $w={86} $z={1}>SETTING</SideTab>
          </SideTabs>
          <ToolBlock>
            <ToolRow>
              <ToolButton type="button" $w={81}>
                <Icon name="drill" />
                <CodeLabel>G81</CodeLabel>
                <Caret $far />
              </ToolButton>
              <Tool icon="manualHole" label="手動穴" on />
              <CaptionTool icon="autoHoles" caption="AUTO" w={30} />
              <CaptionTool icon="frameHoles" caption="AUTO" w={30} />
              <CaptionTool icon="frameHolesOff" caption="OFF" color="#9c0a18" w={30} />
            </ToolRow>
            <ToolRow>
              <Tool icon="pocket" label="ポケット" />
              <Tool icon="profile" label="輪郭" />
              <Separator />
              <CaptionTool icon="corner" caption="G41.42" plain />
              <CaptionTool icon="chamfer" caption="G41.42" plain />
              <Separator />
              <Tool icon="lead" label="リード" />
            </ToolRow>
            <ToolRow>
              <Tool icon="turnLeft" label="左補正" on />
              <Tool icon="turnRight" label="右補正" />
              <Separator />
              <ToolButton type="button" $on><CodeLabel>G41</CodeLabel></ToolButton>
              <ToolButton type="button"><CodeLabel>G42</CodeLabel></ToolButton>
              <Separator />
              <Tool icon="plunge" label="垂直" on />
              <Tool icon="ramp" label="斜め" />
              <Tool icon="spiral" label="円弧" />
            </ToolRow>
            <ToolRow>
              <Tool icon="eraser" label="消去" />
              <Separator />
              <Tool icon="tPath" label="等高線" />
              <Tool icon="zigzag" label="走査線" />
              <Tool icon="spiralT" label="渦巻き" />
              <Separator />
              <Tool icon="dome" label="荒取り" />
              <Tool icon="domeHalf" label="仕上げ" />
              <Separator />
              <ToolButton type="button" aria-label="文字">
                <Stack>
                  <BigA>A</BigA>
                  <Dots />
                </Stack>
              </ToolButton>
            </ToolRow>
          </ToolBlock>
          <Form>
            <FieldRow>
              <FieldLabel htmlFor="dm" $wide>工具径 (DM)</FieldLabel>
              <Field id="dm" defaultValue="4" disabled />
              <FieldLabel htmlFor="d" $wide>D</FieldLabel>
              <Field id="d" $w={28} defaultValue="4" disabled />
            </FieldRow>
            {topFields.map(([label, value], i) => (
              <FieldRow key={label}>
                <FieldLabel htmlFor={`t${i}`}>{label}</FieldLabel>
                <Field id={`t${i}`} defaultValue={value} disabled />
              </FieldRow>
            ))}
            <DepthArea>
              <DepthPicture />
              <DepthGrid>
                {depthFields.map(([label, value], i) => (
                  <DepthRow key={label}>
                    <Field id={`z${i}`} $w={50} defaultValue={value} disabled />
                    <FieldLabel htmlFor={`z${i}`}>{label}</FieldLabel>
                  </DepthRow>
                ))}
              </DepthGrid>
            </DepthArea>
            <FinishArea>
              <div>
                {finishFields.map(([label, value], i) => (
                  <FieldRow key={label}>
                    <FieldLabel htmlFor={`f${i}`}>{label}</FieldLabel>
                    <Field id={`f${i}`} $w={50} defaultValue={value} disabled />
                  </FieldRow>
                ))}
              </div>
              <OkButton type="button" disabled>OK</OkButton>
            </FinishArea>
          </Form>
          <MiniBar>
            <Tool icon="insert" label="挿入" />
            <Tool icon="stop" label="停止" />
            <Separator />
            <Tool icon="monitor" label="表示" />
            <Tool icon="axes" label="座標軸" />
            <Separator />
            <ToolButton type="button" $w={72}>
              <Icon name="faucet" />
              <CodeLabel>M08</CodeLabel>
              <Caret />
            </ToolButton>
          </MiniBar>
          <ListBox><ListRow /></ListBox>
        </Side>

        <Work>
          <Canvas>
            <Part />
            <PopupMenu>
              <PopupItem type="button" $hot><Icon name="thumb" size={20} />終了 End</PopupItem>
              <PopupRule />
              <PopupItem type="button"><Icon name="undo" size={20} />元に戻す Ctrl+Z</PopupItem>
              <PopupItem type="button" disabled><Icon name="redo" size={20} />やり直し Ctrl+A</PopupItem>
            </PopupMenu>
            <Pointer width="14" height="21" aria-hidden>
              <path d="M1.500 1.500v15l4-3 3 6 3-1.500-3-5.500h5z" fill="#fff" stroke="#222" />
            </Pointer>
          </Canvas>
          <LayerBar>
            <LayerTab type="button"><Icon name="bulb" size={16} />Layer0</LayerTab>
            <ScrollButton type="button" aria-label="上へ" />
          </LayerBar>
        </Work>

        <ViewTabs>
          <ViewTab type="button" $h={107}>CAD</ViewTab>
          <ViewTab type="button" $h={110} $active>CAM</ViewTab>
          <ViewTab type="button" $h={113}>VIEW</ViewTab>
        </ViewTabs>
      </Body>

      <BottomBar>
        <Combo>
          <Select aria-label="レイヤー"><option value="" /></Select>
          <BoxCaret />
        </Combo>
        <Tool icon="folder" label="フォルダ" w={30} />
        <Spacer />
        <Tool icon="rotate" label="回転" w={30} />
        <Spacer />
        <Separator />
        <Tool icon="gridSnap" label="グリッド" w={32} />
        <Tool icon="target" label="原点" w={32} />
        <Separator />
        <Tool icon="snapFoot" label="垂点" w={38} on />
        <Tool icon="snapCross" label="交点" w={38} on />
        <Tool icon="snapEnd" label="端点" w={38} on />
        <Tool icon="snapQuad" label="四半円点" w={38} />
        <Tool icon="snapOn" label="中点" w={38} on />
        <Tool icon="snapNear" label="線上点" w={38} />
        <Tool icon="clear" label="解除" w={38} />
        <Separator />
        <Tool icon="bulbsOn" label="全点灯" w={32} />
        <Tool icon="bulbsOff" label="全消灯" w={32} />
        <Tool icon="bulbMove" label="移動" w={32} />
        <ToolButton type="button" aria-label="配色" $w={32}>
          <svg width="14" height="14" shapeRendering="crispEdges">
            <rect width="14" height="14" fill="#777" />
            {palette.map((c, i) => <rect key={c} x={1 + (i % 3) * 4} y={1 + Math.floor(i / 3) * 4} width="4" height="4" fill={c} />)}
          </svg>
        </ToolButton>
      </BottomBar>
      <StatusBar>
        <StatusCell $w={160} $center>手動穴</StatusCell>
        <StatusCell>穴位置[4]を入力して下さい(終了=End)</StatusCell>
        <StatusCell $w={100}><ReadOut>S 1.695</ReadOut></StatusCell>
        <StatusCell $w={100} $center><ReadOut>G 1</ReadOut></StatusCell>
        <StatusCell $w={100}><ReadOut>X 5.000</ReadOut></StatusCell>
        <StatusCell $w={100}><ReadOut>Y 6.000</ReadOut></StatusCell>
        <StatusCell $w={69}>
          <ReadOut>L</ReadOut>
          <ReadOut $end>25</ReadOut>
          <svg width="10" height="17" fill="#b5b3b2" aria-hidden>
            <path d="M7 6h2v2H7zM4 9h2v2H4zM7 9h2v2H7zM1 12h2v2H1zM4 12h2v2H4zM7 12h2v2H7z" />
          </svg>
        </StatusCell>
      </StatusBar>
    </Frame>
  );
}
